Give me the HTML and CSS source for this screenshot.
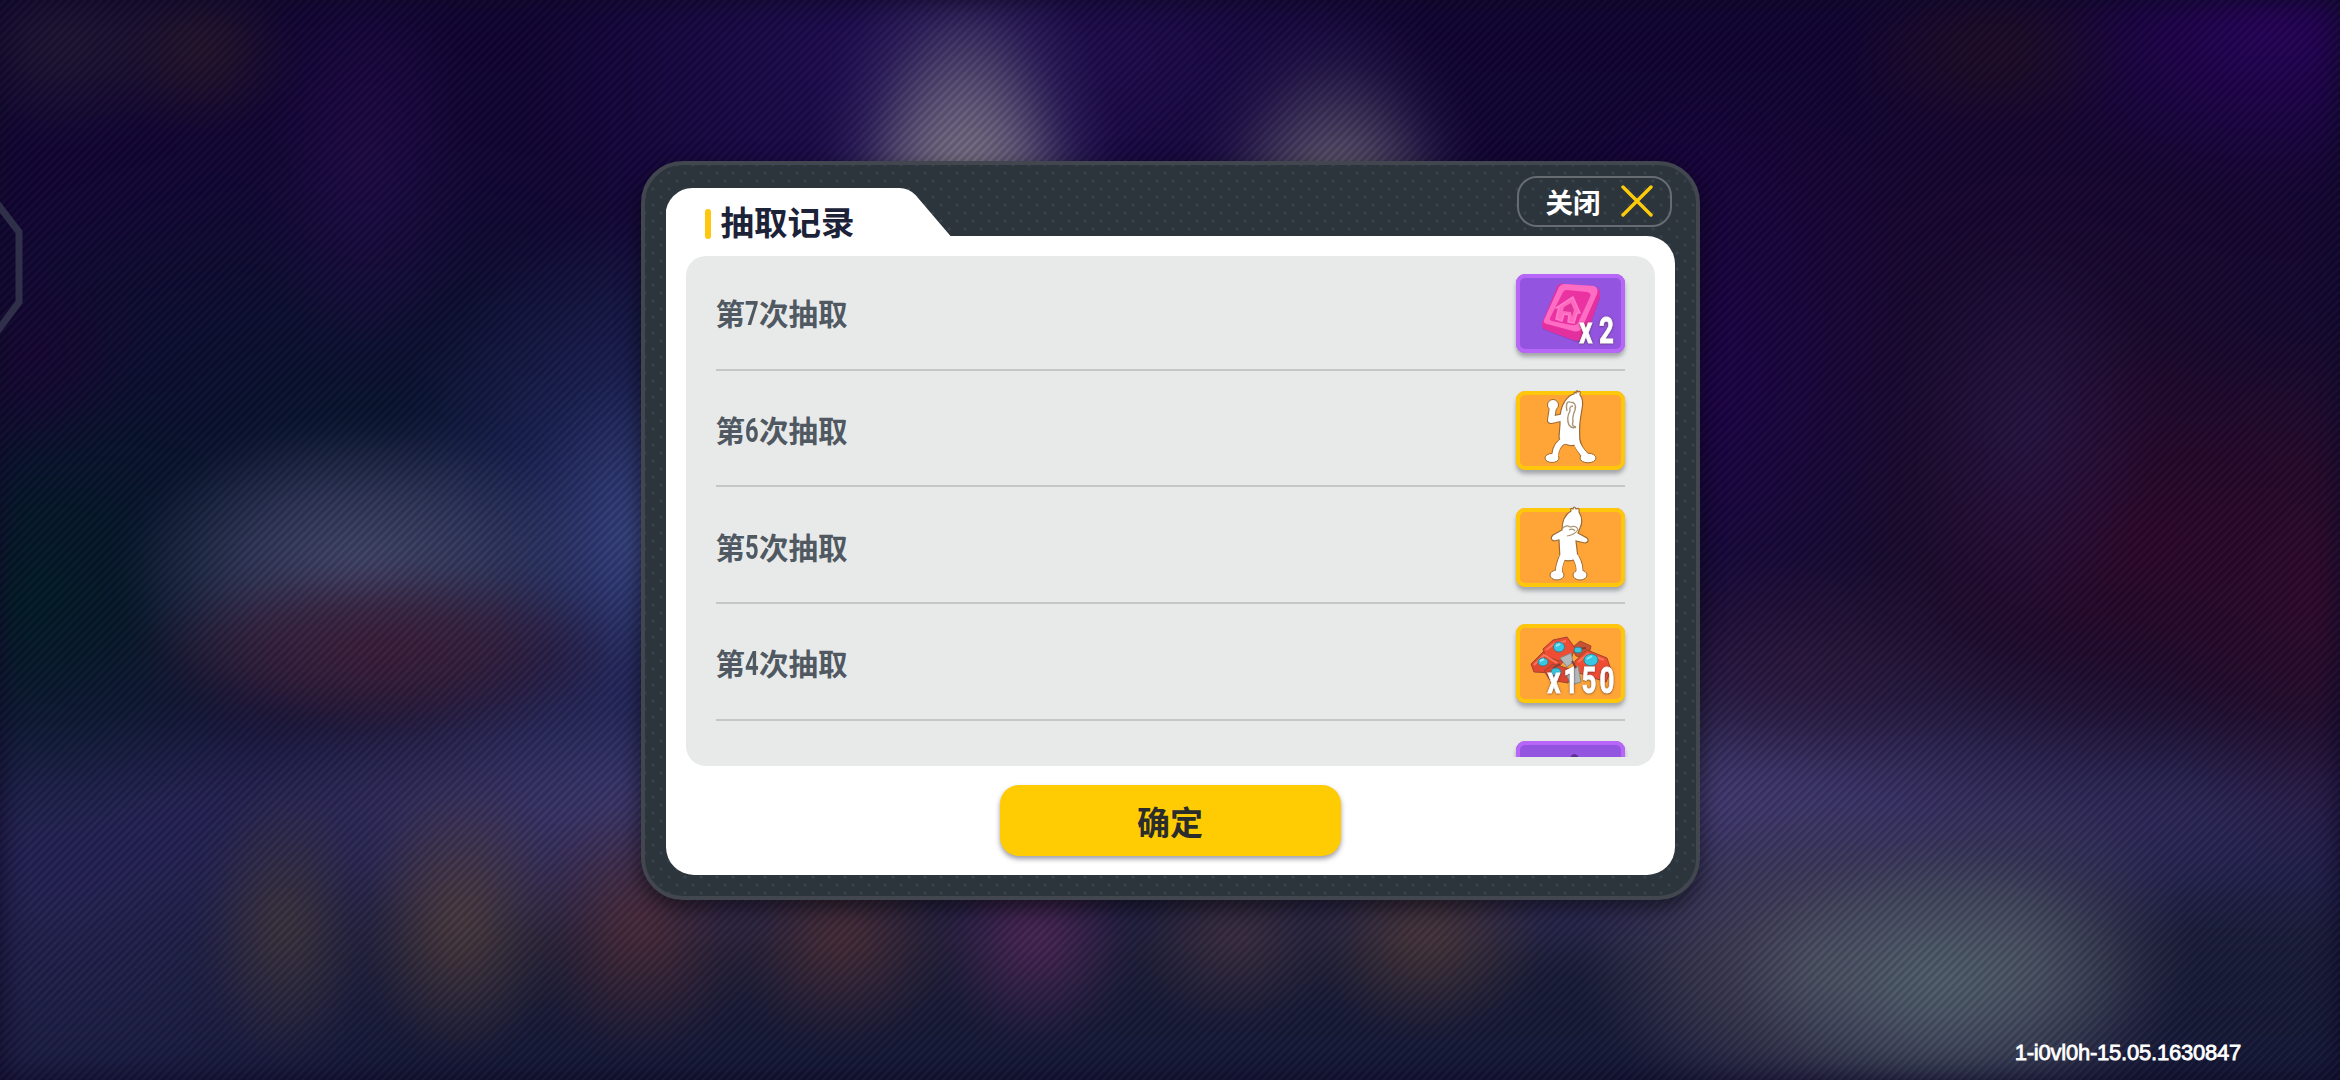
FILE: index.html
```
<!DOCTYPE html>
<html lang="zh-CN">
<head>
    <meta charset="UTF-8">
    <meta name="viewport" content="width=device-width, initial-scale=1.0">
    <title>抽取记录</title>
    <link rel="stylesheet" href="styles.css">
</head>
<body>
    <div class="backdrop">
        <div class="scene"></div>
        <div class="stripes"></div>
    </div>
    <svg class="side-tab" width="26" height="140" viewBox="0 0 26 140">
        <path d="M-4 0L19 30V100L-4 131" fill="none" stroke="#302f49" stroke-width="7"/>
    </svg>

    <div class="modal">
        <div class="modal-header">
            <div class="tab"><h1>抽取记录</h1></div>
            <button class="close">
                <span>关闭</span>
                <svg width="32" height="32" viewBox="0 0 32 32">
                    <path d="M2 2L30 30M30 2L2 30" stroke="#fdcb0a" stroke-width="3.4" stroke-linecap="round"/>
                </svg>
            </button>
        </div>

        <div class="panel">
            <div class="list">
                <div class="row">
                    <p>第<span class="num">7</span>次抽取</p>
                    <div class="thumb purple">
                        <svg width="109" height="79" viewBox="0 0 109 79">
                            <path d="M27 52L42 16Q44 12 49 12L78 15Q85 17 84 24L70 62Q67 70 60 68L29 56Q26 55 27 52Z" fill="#6e35ae" opacity=".5"/>
                            <path d="M26 49L41 13Q43 9 48 10L78 12Q85 14 84 23L71 60Q67 69 57 66L30 56Q25 54 26 49Z" fill="#e4309f"/>
                            <path d="M28 46L43 13Q45 10 49 10L78 12Q83 14 81 20L66 54Q63 59 57 57L31 50Q27 49 28 46Z" fill="#ff6cc4"/>
                            <path d="M34 44L47 18Q48 16 51 16L71 18Q76 19 74 23L62 49Q60 52 55 51L36 47Q33 46 34 44Z" fill="#ea33a0"/>
                            <path d="M43 33L40 45L46 47L48 40L53 41L52 48L58 49L61 39L64 39L57 23L40 34Z" fill="#ff6abf" stroke="#ff7dcb" stroke-width="1.5" stroke-linejoin="round"/>
                            <path d="M48 33L55 29L58 36L56 43L55 38L47 37Z" fill="#df349a"/>
                        </svg>
                        <span class="count">x<i></i>2</span>
                    </div>
                </div>
                <div class="row">
                    <p>第<span class="num">6</span>次抽取</p>
                    <div class="thumb orange">
                        <svg width="109" height="79" viewBox="0 0 109 79">
                            <g>
                                <path d="M37 16L35 29L47 26" fill="none" stroke="#9c6a32" stroke-width="8" stroke-linecap="round" stroke-linejoin="round"/>
                                <path d="M49 49Q40 53 39 64M61 49Q62 58 70 65" fill="none" stroke="#9c6a32" stroke-width="7.5"/>
                                <path d="M58 3Q58 0 60 2Q61-2 62 1Q65-1 64 4Q68 9 66 18C64 30 63 35 64 51Q59 56 52 54Q44 53 43 46L44 33Q43 19 49 10Q53 4 58 3Z" fill="#fff" stroke="#9c6a32" stroke-width="1.2"/>
                                <circle cx="37" cy="14" r="5.5" fill="#fff" stroke="#9c6a32"/>
                                <ellipse cx="36" cy="67" rx="7" ry="4.5" fill="#fff" stroke="#9c6a32"/>
                                <ellipse cx="72" cy="67" rx="8" ry="4.8" fill="#fff" stroke="#9c6a32"/>
                                <path d="M37 16L35 29L48 26M49 49Q40 53 39 65M60 49Q62 58 71 66" fill="none" stroke="#fff" stroke-width="6" stroke-linecap="round" stroke-linejoin="round"/>
                                <path d="M51 20Q49 10 54 11Q61 11 59 19Q56 26 57 31Q55 35 60 36M57 15Q53 15 54 20Q50 27 53 34Q56 38 60 36" fill="none" stroke="#a99473" stroke-width="1.4"/>
                            </g>
                        </svg>
                    </div>
                </div>
                <div class="row">
                    <p>第<span class="num">5</span>次抽取</p>
                    <div class="thumb orange">
                        <svg width="109" height="79" viewBox="0 0 109 79">
                            <g>
                                <path d="M46 50Q42 59 43 66M60 50Q65 58 63 66" fill="none" stroke="#9c6a32" stroke-width="7.5"/>
                                <path d="M55 3Q54-1 57 1Q58-3 60 1Q64-1 63 4Q68 12 64 20L62 25L71 30Q74 34 69 35L60 33L62 50Q53 55 44 51L43 32L38 33Q33 31 37 27L46 22Q46 8 55 3Z" fill="#fff" stroke="#9c6a32" stroke-width="1.2"/>
                                <ellipse cx="41" cy="67" rx="7" ry="5" fill="#fff" stroke="#9c6a32"/>
                                <ellipse cx="64" cy="67" rx="7" ry="5" fill="#fff" stroke="#9c6a32"/>
                                <path d="M47 48Q42 59 43 66M59 48Q65 58 63 66" fill="none" stroke="#fff" stroke-width="6"/>
                                <path d="M46 21Q50 16 54 19Q61 17 62 22Q58 27 51 28M53 22Q57 20 59 23" fill="none" stroke="#a99473" stroke-width="1.2"/>
                            </g>
                        </svg>
                    </div>
                </div>
                <div class="row">
                    <p>第<span class="num">4</span>次抽取</p>
                    <div class="thumb orange">
                        <svg width="109" height="79" viewBox="0 0 109 79">
                            <g stroke="#9e4631" stroke-width="1" stroke-linejoin="round">
                                <path d="M56 24L64 17L75 22L72 34L60 32Z" fill="#c9512f"/>
                                <path d="M15 40L28 27L47 38L38 49L18 48Z" fill="#e2482f"/>
                                <path d="M28 47L37 40L54 45L52 59L34 56Z" fill="#dc452f"/>
                                <path d="M27 25L37 16L51 13L59 24L55 35L43 37L29 32Z" fill="#ee4c33"/>
                                <path d="M59 37L71 26L91 34L95 46L90 58L63 49L58 43Z" fill="#ef4d33"/>
                                <path d="M44 34L55 29L57 38L51 43ZM50 50L62 42L65 58L55 61Z" fill="#b3b8ba" stroke="#878888"/>
                            </g>
                            <path d="M30 26L38 20L50 17M62 38L72 30L88 36M18 41L28 31L41 39" fill="none" stroke="#ff765b" stroke-width="2"/>
                            <path d="M44 40L37 44M56 37L60 44M59 25L70 24" stroke="#843d34" stroke-width="2"/>
                            <g fill="#38c7e2" stroke="#397c8e" stroke-width="1">
                                <ellipse cx="43" cy="23" rx="5.5" ry="5"/>
                                <ellipse cx="27" cy="38" rx="5" ry="4"/>
                                <ellipse cx="62" cy="26" rx="4" ry="3"/>
                                <ellipse cx="40" cy="48" rx="5" ry="4"/>
                                <ellipse cx="75" cy="36" rx="7" ry="6"/>
                            </g>
                            <path d="M40 22L44 20M71 35L76 32M24 37L28 35" stroke="#8fe9f5" stroke-width="2"/>
                        </svg>
                        <span class="count">x150</span>
                    </div>
                </div>
                <div class="row last">
                    <div class="thumb purple">
                        <svg width="109" height="79" viewBox="0 0 109 79">
                            <path d="M55 15Q58 11 62 15L67 30H50Z" fill="#5b318e"/>
                        </svg>
                    </div>
                </div>
            </div>
            <button class="confirm">确定</button>
        </div>
    </div>

    <div class="version">1-i0vl0h-15.05.1630847</div>
</body>
</html>
```

FILE: styles.css
```
* {
    box-sizing: border-box;
}
body {
    margin: 0;
    width: 2340px;
    height: 1080px;
    overflow: hidden;
    position: relative;
    display: flex;
    justify-content: center;
    align-items: flex-start;
    padding-top: 161px;
    background-color: #0f0a2b;
    font-family: "Liberation Sans", "Noto Sans CJK SC", sans-serif;
}
button {
    border: none;
    padding: 0;
    font-family: inherit;
    cursor: pointer;
}

/* blurred scene behind the dialog */
.backdrop {
    position: absolute;
    inset: 0;
    overflow: hidden;
}
.scene {
    width: 2340px;
    height: 1080px;
    filter: blur(14px);
    background-image:
        radial-gradient(ellipse 155px 290px at 965px 215px, rgba(140, 136, 146, 1), rgba(122, 116, 140, 0.75) 40%, rgba(80, 70, 125, 0.3) 72%, transparent),
        radial-gradient(ellipse 155px 210px at 1335px 215px, rgba(126, 120, 132, 1), rgba(96, 88, 116, 0.6) 45%, rgba(60, 48, 100, 0.25) 75%, transparent),
        radial-gradient(ellipse 130px 100px at 65px 45px, rgba(36, 28, 50, 0.8), transparent),
        radial-gradient(ellipse 100px 90px at 200px 50px, rgba(42, 28, 40, 0.8), transparent),
        radial-gradient(ellipse 110px 220px at 365px 165px, rgba(36, 12, 78, 0.7), transparent),
        radial-gradient(ellipse 330px 330px at 850px 60px, rgba(36, 15, 92, 0.75), transparent),
        radial-gradient(ellipse 300px 200px at 1130px 60px, rgba(36, 14, 88, 0.7), transparent),
        radial-gradient(ellipse 150px 90px at 1990px 50px, rgba(36, 16, 34, 0.8), transparent),
        radial-gradient(ellipse 250px 160px at 2270px 30px, rgba(42, 2, 96, 0.9), transparent),
        radial-gradient(ellipse 110px 110px at 30px 360px, rgba(26, 4, 52, 0.8), transparent),
        radial-gradient(ellipse 250px 90px at 380px 650px, rgba(62, 28, 56, 0.95), rgba(58, 28, 56, 0.65) 50%, transparent),
        radial-gradient(ellipse 240px 150px at 360px 570px, rgba(76, 80, 118, 0.9), rgba(66, 72, 108, 0.65) 50%, transparent),
        radial-gradient(ellipse 280px 330px at 650px 540px, rgba(66, 80, 148, 0.9), rgba(42, 50, 116, 0.5) 50%, transparent),
        radial-gradient(ellipse 260px 240px at 30px 600px, rgba(0, 30, 38, 0.9), transparent),
        radial-gradient(ellipse 500px 300px at 350px 420px, rgba(6, 24, 46, 0.7), transparent),
        radial-gradient(ellipse 85px 140px at 285px 925px, rgba(66, 56, 62, 0.9), transparent),
        radial-gradient(ellipse 105px 140px at 460px 920px, rgba(84, 64, 64, 0.9), transparent),
        radial-gradient(ellipse 120px 130px at 640px 925px, rgba(82, 46, 58, 0.9), transparent),
        radial-gradient(ellipse 120px 110px at 840px 935px, rgba(80, 48, 56, 0.9), transparent),
        radial-gradient(ellipse 105px 110px at 1035px 935px, rgba(84, 40, 92, 0.9), transparent),
        radial-gradient(ellipse 110px 90px at 1235px 935px, rgba(66, 50, 66, 0.9), transparent),
        radial-gradient(ellipse 120px 100px at 1425px 935px, rgba(80, 58, 58, 0.9), transparent),
        radial-gradient(ellipse 200px 130px at 1940px 980px, rgba(86, 104, 116, 0.85), transparent),
        radial-gradient(ellipse 240px 160px at 1820px 965px, rgba(80, 78, 98, 0.9), rgba(66, 64, 88, 0.6) 60%, transparent),
        radial-gradient(ellipse 180px 170px at 2010px 960px, rgba(76, 78, 96, 0.9), rgba(60, 60, 86, 0.6) 60%, transparent),
        radial-gradient(ellipse 130px 200px at 2030px 430px, rgba(40, 24, 76, 0.75), transparent),
        radial-gradient(ellipse 280px 230px at 2130px 540px, rgba(54, 6, 42, 0.75), transparent),
        radial-gradient(ellipse 200px 280px at 2340px 600px, rgba(58, 10, 44, 0.75), transparent),
        radial-gradient(ellipse 220px 110px at 1800px 660px, rgba(50, 24, 62, 0.7), transparent),
        radial-gradient(ellipse 220px 340px at 1710px 390px, rgba(34, 0, 82, 0.7), transparent),
        radial-gradient(ellipse 480px 420px at 2050px 420px, rgba(30, 10, 42, 0.8), transparent),
        radial-gradient(ellipse 650px 180px at 1700px 800px, rgba(72, 62, 118, 0.9), transparent),
        radial-gradient(ellipse 420px 150px at 660px 800px, rgba(70, 62, 114, 0.9), transparent),
        radial-gradient(ellipse 400px 300px at 60px 900px, rgba(38, 36, 88, 0.8), transparent),
        linear-gradient(#110434 0%, #130536 20%, #0e0d32 45%, #131234 66%, #252352 74%, #232250 80%, #1a1d38 88%, #16193a 100%);
}
.stripes {
    position: absolute;
    inset: 0;
    background: repeating-linear-gradient(135deg, rgba(0, 0, 0, 0.14) 0, rgba(0, 0, 0, 0.14) 2.2px, rgba(255, 255, 255, 0.02) 3.4px, rgba(255, 255, 255, 0.02) 4.6px, rgba(0, 0, 0, 0.14) 5.66px);
}
.side-tab {
    position: absolute;
    left: 0;
    top: 202px;
}

.modal {
    position: relative;
    width: 1059px;
    height: 739px;
    padding: 0 21px;
    border: 4px solid #42464f;
    border-radius: 42px;
    background-color: #2c343c;
    background-image:
        radial-gradient(circle, #384249 1px, transparent 2.2px),
        radial-gradient(circle, #384249 1px, transparent 2.2px);
    background-size: 16px 16px;
    background-position: 0 0, 8px 8px;
    box-shadow: 0 8px 22px rgba(0, 0, 0, 0.55);
}
.modal-header {
    display: flex;
    justify-content: space-between;
    height: 71px;
}
.tab {
    position: relative;
    z-index: 1;
    display: flex;
    align-items: center;
    align-self: flex-end;
    width: 285px;
    height: 48px;
    padding: 23px 0 0 39px;
}
.tab::before {
    content: "";
    position: absolute;
    inset: 0;
    z-index: -1;
    background-color: #fff;
    clip-path: path("M0 48V27A27 27 0 0 1 27 0H234Q243 0 250 7L285 48Z");
}
h1 {
    display: flex;
    align-items: center;
    gap: 10px;
    margin: 0;
    font-size: 33.5px;
    font-weight: 700;
    line-height: 34px;
    color: #1c2238;
}
h1::before {
    content: "";
    width: 6px;
    height: 30px;
    border-radius: 3px;
    background-color: #fec60e;
}
.close {
    display: flex;
    align-items: center;
    gap: 20px;
    width: 155px;
    height: 51px;
    margin: 11px 3px 0 0;
    padding: 0 0 2px 27px;
    border: 2px solid #676c73;
    border-radius: 20px;
    background: transparent;
    color: #fff;
    font-size: 27.5px;
    font-weight: 700;
}
.panel {
    display: flex;
    flex-direction: column;
    align-items: center;
    gap: 19px;
    width: 1009px;
    height: 639px;
    padding: 20px 20px 0;
    border-radius: 0 28px 28px 28px;
    background-color: #fff;
}
.list {
    width: 969px;
    height: 510px;
    padding: 0 30px;
    border-radius: 20px;
    border-bottom: 9px solid #e8eaea;
    background-color: #e8eaea;
    overflow: hidden;
}
.row {
    display: flex;
    justify-content: space-between;
    align-items: center;
    height: 116.7px;
    padding-top: 5px;
    border-bottom: 2px solid #c4c7c7;
}
.row:first-child {
    margin-top: -2px;
}
.row.last {
    justify-content: flex-end;
}
.row p {
    margin: 0;
    padding-top: 3px;
    font-size: 29.5px;
    font-weight: 700;
    line-height: 44px;
    color: #505962;
}
.num {
    display: inline-block;
    width: 14px;
    font-family: Roboto, sans-serif;
    font-size: 34px;
    line-height: 40px;
    transform: scaleX(0.7);
    transform-origin: 0 50%;
}
.thumb {
    position: relative;
    width: 109px;
    height: 79px;
    border-radius: 9px;
}
.thumb svg {
    display: block;
    overflow: visible;
}
.thumb.purple {
    background-color: #9354df;
    box-shadow: inset 0 0 0 4px #b866f7, 0 4px 4px rgba(80, 85, 90, 0.45);
}
.thumb.orange {
    background-color: #ffa436;
    box-shadow: inset 0 0 0 4px #fec70b, 0 4px 4px rgba(80, 85, 90, 0.45);
}
.count {
    position: absolute;
    right: 7px;
    bottom: 1px;
    font-family: Roboto, sans-serif;
    font-size: 37px;
    font-weight: 700;
    line-height: 42px;
    letter-spacing: 4.5px;
    color: #fff;
    -webkit-text-stroke: 0.8px #fff;
    text-shadow: 0 0 3px rgba(70, 45, 50, 0.8), 0 1px 2px rgba(70, 45, 50, 0.6);
    transform: scaleX(0.7);
    transform-origin: 100% 50%;
}
.count i {
    display: inline-block;
    width: 5px;
}
.confirm {
    width: 341px;
    height: 71px;
    border-radius: 19px;
    background-color: #ffcc04;
    box-shadow: 0 3px 5px rgba(60, 60, 80, 0.5);
    color: #2b2d2c;
    font-size: 33px;
    font-weight: 700;
}
.version {
    position: absolute;
    right: 99px;
    top: 1039px;
    font-size: 22px;
    line-height: 28px;
    letter-spacing: -0.22px;
    color: #fff;
    -webkit-text-stroke: 0.8px #fff;
}
```
